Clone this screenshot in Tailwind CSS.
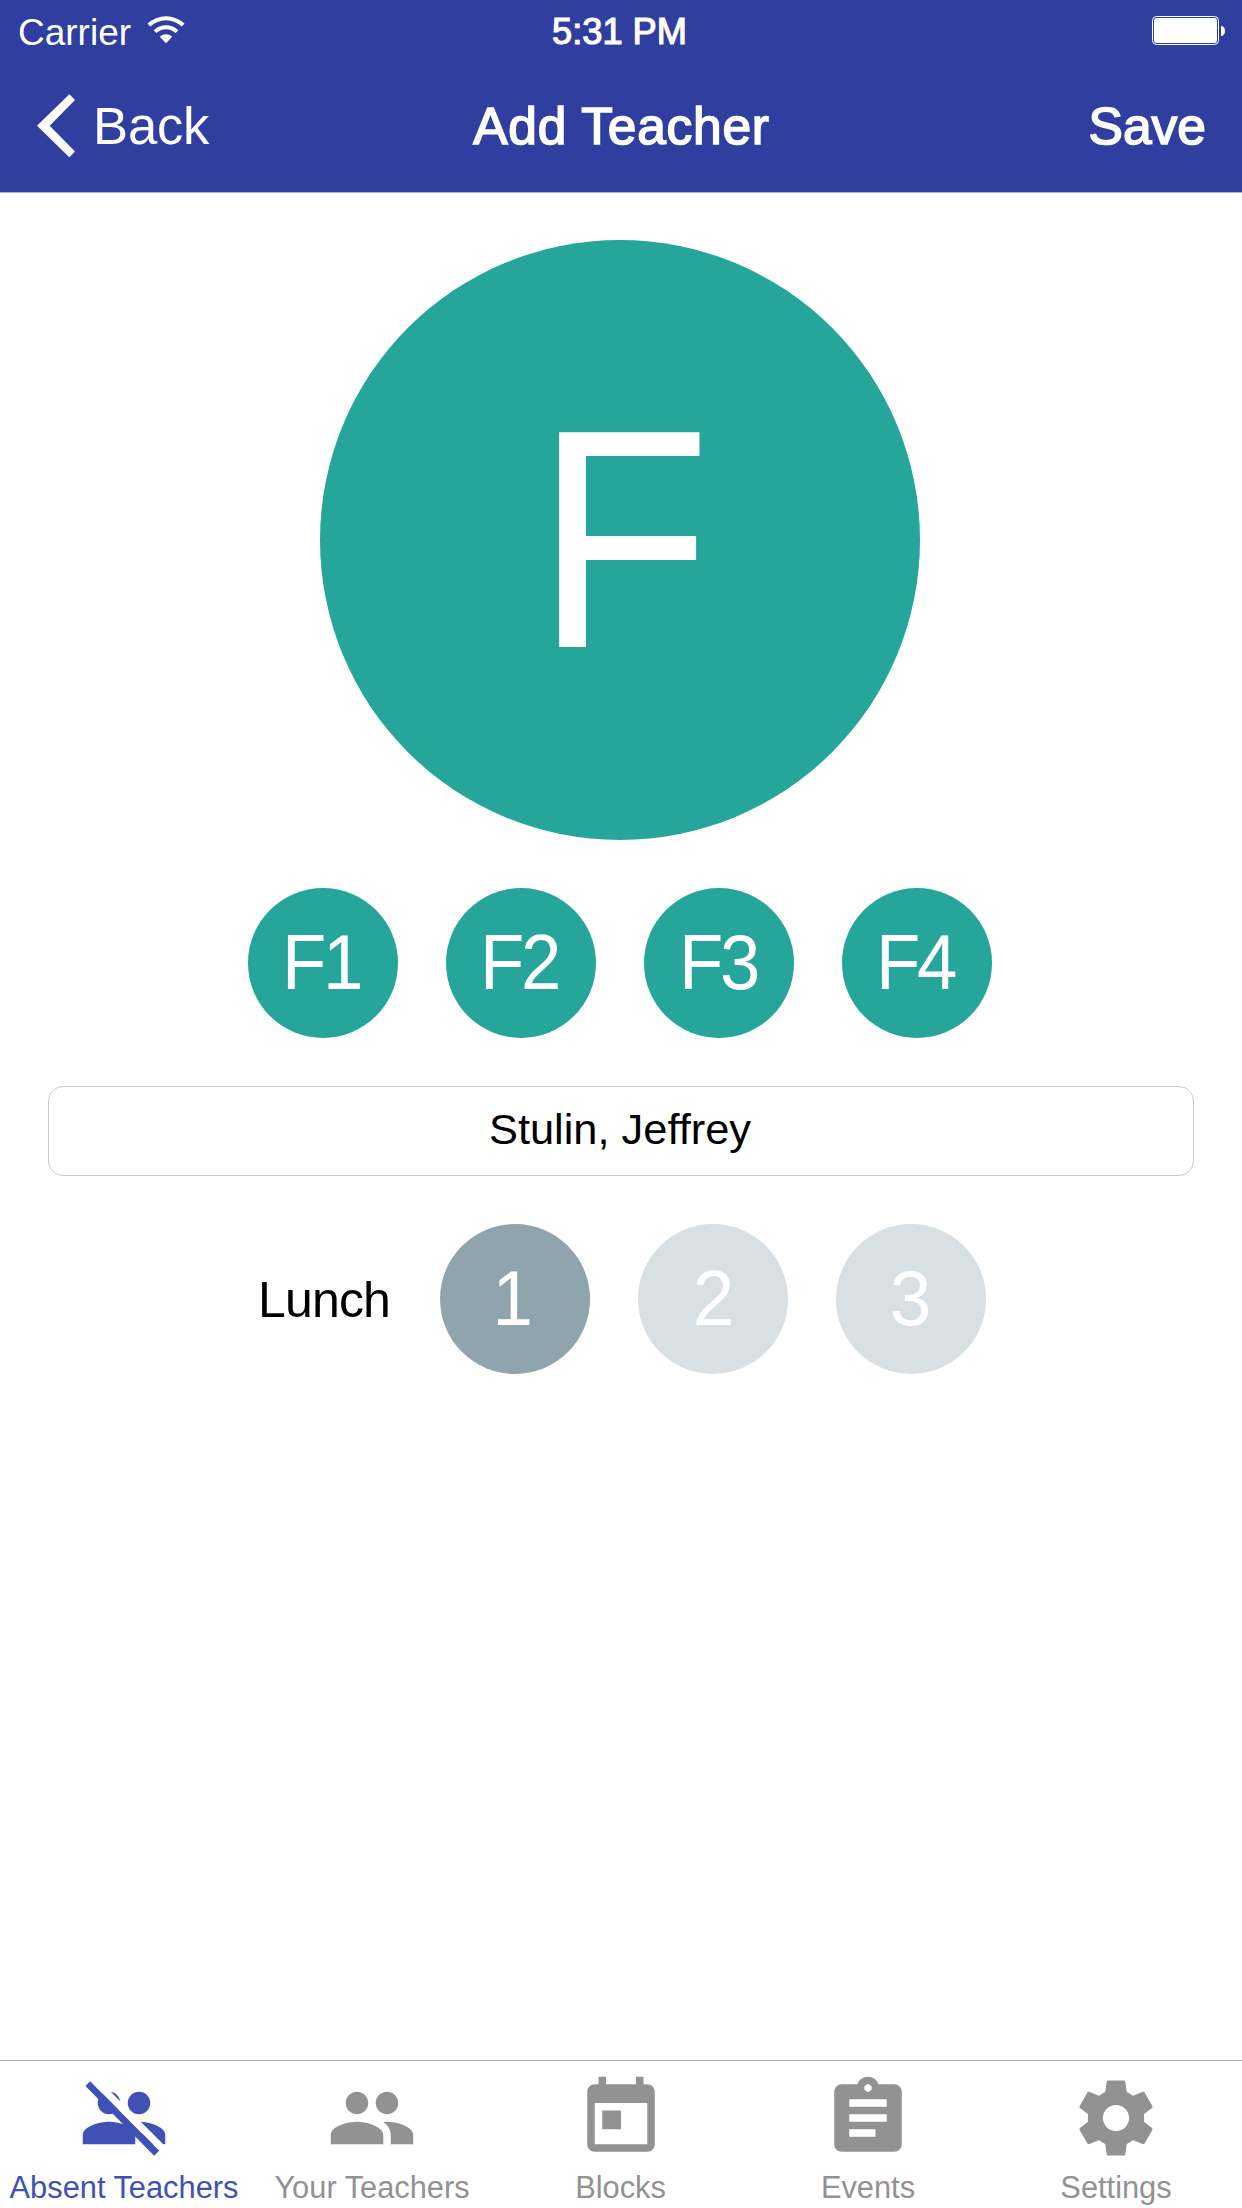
<!DOCTYPE html>
<html lang="en">
<head>
<meta charset="utf-8">
<title>Add Teacher</title>
<script src="https://cdn.jsdelivr.net/npm/@tailwindcss/browser@4"></script>
</head>
<body class="flex h-[2208px] w-[1242px] flex-col overflow-hidden bg-white font-['Liberation_Sans',Arial,sans-serif] text-black">
  <header class="h-[193px] shrink-0 border-b border-[#b0b0b0] bg-[#303f9f] text-white">
    <!-- Status bar -->
    <div class="grid h-[62px] grid-cols-[1fr_auto_1fr] items-center pl-[18px] pr-[17px] text-[37px] leading-none">
      <div class="flex items-center gap-[16px]">
        <span class="pt-[2px]">Carrier</span>
        <svg class="mb-[3px] h-[28px] w-[38px]" viewBox="0 0 38 28" fill="currentColor">
          <path d="M.5 7.6A27 27 0 0 1 37.5 7.6L34.8 10.6A23 23 0 0 0 3.2 10.6Z"/>
          <path d="M6.7 14.2A18 18 0 0 1 31.3 14.2L28.6 17.1A14 14 0 0 0 9.4 17.1Z"/>
          <path d="M12.8 20.7A9 9 0 0 1 25.2 20.7L19 27.3Z"/>
        </svg>
      </div>
      <span class="pt-[3px] pr-[4px] text-[36.2px] [-webkit-text-stroke:1.2px_white]">5:31 PM</span>
      <svg class="mb-[1px] h-[29px] w-[73px] justify-self-end" viewBox="0 0 73 29" fill="currentColor">
        <rect x=".5" y=".5" width="66" height="28" rx="4" fill="none" stroke="currentColor"/>
        <rect x="2" y="2" width="63" height="25" rx="2.5"/>
        <path d="M69 10c5.300 0 5.300 10 0 10z"/>
      </svg>
    </div>
    <!-- Navigation bar -->
    <nav class="grid h-[128px] grid-cols-[1fr_auto_1fr] items-center pl-[37px] pr-[36px] text-[51.5px] leading-none">
      <div class="flex items-center gap-[18px]">
        <svg class="h-[64px] w-[38px]" viewBox="0 0 38 64" fill="currentColor"><path d="M32.300.3 38 6 12.700 31.700 38 57.400 32.300 63.200 0 31.700z"/></svg>
        <span class="pt-[1px] text-[52.6px] tracking-[-0.2px]">Back</span>
      </div>
      <h1 class="pt-[2px] tracking-[0.75px] [-webkit-text-stroke:1.6px_white]">Add Teacher</h1>
      <span class="justify-self-end pt-[2px] [-webkit-text-stroke:1.6px_white]">Save</span>
    </nav>
  </header>

  <main class="flex grow flex-col items-center gap-12 px-12 pt-[47px]">
    <div class="mr-[2px] flex size-[600px] shrink-0 items-center justify-center rounded-full bg-[#26a69a] pb-[2px] pl-[6px] text-[312px] leading-none text-white"><span class="scale-x-[0.92]">F</span></div>

    <div class="flex gap-12 pr-[2px] text-[78px] leading-none tracking-[-3.5px] text-white">
      <div class="flex size-[150px] items-center justify-center rounded-full bg-[#26a69a] pb-[2px] pr-[4px]"><span class="scale-x-[0.93]">F1</span></div>
      <div class="flex size-[150px] items-center justify-center rounded-full bg-[#26a69a] pb-[2px] pr-[3px]"><span class="scale-x-[0.93]">F2</span></div>
      <div class="flex size-[150px] items-center justify-center rounded-full bg-[#26a69a] pb-[2px] pr-[1px]"><span class="scale-x-[0.93]">F3</span></div>
      <div class="flex size-[150px] items-center justify-center rounded-full bg-[#26a69a] pb-[2px] pr-[3px]"><span class="scale-x-[0.93]">F4</span></div>
    </div>

    <input type="text" value="Stulin, Jeffrey" class="h-[90px] w-full rounded-[15px] border border-[#cccccc] bg-white pr-[2px] pb-[3px] text-center text-[43.4px]">

    <div class="flex items-center gap-12">
      <span class="w-[136px] pt-[2px] text-center text-[50px] leading-none tracking-[-0.8px]">Lunch</span>
      <div class="flex gap-12 text-[78px] leading-none text-white">
        <div class="flex size-[150px] items-center justify-center rounded-full bg-[#90a4ae] pb-[2px] pr-[4px]"><span class="scale-x-[0.93]">1</span></div>
        <div class="flex size-[150px] items-center justify-center rounded-full bg-[#d8e0e3] pb-[2px] pl-[2px]"><span class="scale-x-[0.96]">2</span></div>
        <div class="flex size-[150px] items-center justify-center rounded-full bg-[#d8e0e3] pb-[2px]"><span class="scale-x-[0.96]">3</span></div>
      </div>
    </div>
  </main>

  <!-- Tab bar -->
  <footer class="grid h-[148px] shrink-0 grid-cols-[repeat(5,248px)] border-t border-[#b0b0b0] text-[30.8px] leading-none text-[#929292]">
    <div class="flex flex-col items-center gap-[10px] pt-[12px] text-[#3f51b5]">
      <svg class="size-[90px]" viewBox="0 0 24 24" fill="currentColor">
        <mask id="gap" maskUnits="userSpaceOnUse" x="0" y="0" width="24" height="24">
          <rect width="24" height="24" fill="white"/>
          <path d="M0-.75 24 23.250V20.550L0-3.450z" fill="black"/>
        </mask>
        <g mask="url(#gap)">
          <circle cx="8" cy="8" r="3"/>
          <path d="M8 13c-2.330 0-7 1.170-7 3.500V19h14v-2.500c0-2.330-4.670-3.500-7-3.500z"/>
          <path d="M16 13c-.29 0-.62.02-.97.05 1.160.84 1.970 1.970 1.970 3.450V19h6v-2.500c0-2.330-4.670-3.500-7-3.500z"/>
        </g>
        <circle cx="16" cy="8" r="3"/>
        <path d="M2.970 2.220 1.720 3.470 20.040 22.040 21.370 20.700z"/>
      </svg>
      <span class="whitespace-nowrap">Absent Teachers</span>
    </div>
    <div class="flex flex-col items-center gap-[10px] pt-[12px]">
      <svg class="size-[90px]" viewBox="0 0 24 24" fill="currentColor"><path d="M16 11c1.660 0 2.990-1.340 2.990-3S17.660 5 16 5c-1.660 0-3 1.340-3 3s1.340 3 3 3zm-8 0c1.660 0 2.990-1.340 2.990-3S9.660 5 8 5C6.340 5 5 6.340 5 8s1.340 3 3 3zm0 2c-2.330 0-7 1.170-7 3.500V19h14v-2.500c0-2.330-4.670-3.500-7-3.500zm8 0c-.29 0-.62.02-.97.05 1.160.84 1.970 1.970 1.970 3.450V19h6v-2.500c0-2.330-4.670-3.500-7-3.500z"/></svg>
      <span>Your Teachers</span>
    </div>
    <div class="flex flex-col items-center gap-[10px] pt-[12px] pl-[1px]">
      <svg class="size-[90px]" viewBox="0 0 24 24" fill="currentColor"><path d="M19 3h-1V1h-2v2H8V1H6v2H5c-1.110 0-1.990.9-1.990 2L3 19c0 1.100.89 2 2 2h14c1.100 0 2-.9 2-2V5c0-1.100-.9-2-2-2zm0 16H5V8h14v11zM7 10h5v5H7z"/></svg>
      <span>Blocks</span>
    </div>
    <div class="flex flex-col items-center gap-[10px] pt-[12px]">
      <svg class="size-[90px]" viewBox="0 0 24 24" fill="currentColor"><path d="M19 3h-4.180C14.400 1.840 13.300 1 12 1c-1.300 0-2.400.84-2.820 2H5c-1.100 0-2 .9-2 2v14c0 1.100.9 2 2 2h14c1.100 0 2-.9 2-2V5c0-1.100-.9-2-2-2zm-7 0c.55 0 1 .45 1 1s-.45 1-1 1-1-.45-1-1 .45-1 1-1zm2 14H7v-2h7v2zm3-4H7v-2h10v2zm0-4H7V7h10v2z"/></svg>
      <span>Events</span>
    </div>
    <div class="flex flex-col items-center gap-[10px] pt-[12px]">
      <svg class="size-[90px]" viewBox="0 0 24 24" fill="currentColor"><path d="M19.430 12.980c.04-.32.07-.64.07-.98s-.03-.66-.07-.98l2.110-1.650c.19-.15.24-.42.12-.64l-2-3.460c-.12-.22-.39-.3-.61-.22l-2.490 1c-.52-.4-1.080-.73-1.690-.98l-.38-2.650C14.460 2.180 14.250 2 14 2h-4c-.25 0-.46.18-.49.42l-.38 2.650c-.61.25-1.170.59-1.690.98l-2.490-1c-.23-.09-.49 0-.61.22l-2 3.460c-.13.22-.07.49.12.64l2.110 1.650c-.04.32-.07.65-.07.98s.03.66.07.98l-2.110 1.650c-.19.15-.24.42-.12.64l2 3.460c.12.22.39.3.61.22l2.490-1c.52.4 1.080.73 1.690.98l.38 2.650c.03.24.24.42.49.42h4c.25 0 .46-.18.49-.42l.38-2.650c.61-.25 1.170-.59 1.690-.98l2.490 1c.23.09.49 0 .61-.22l2-3.460c.12-.22.07-.49-.12-.64l-2.110-1.650zM12 15.500c-1.930 0-3.500-1.570-3.500-3.500s1.570-3.500 3.500-3.500 3.500 1.570 3.500 3.500-1.570 3.500-3.500 3.500z"/></svg>
      <span>Settings</span>
    </div>
  </footer>
</body>
</html>
